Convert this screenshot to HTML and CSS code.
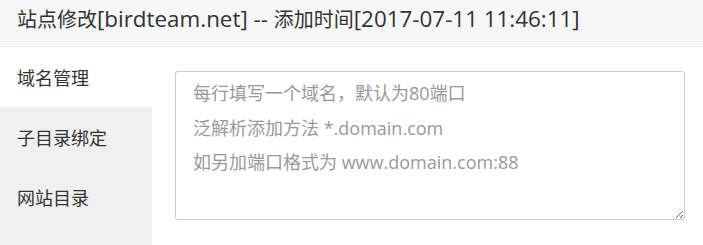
FILE: index.html
```html
<!DOCTYPE html>
<html lang="zh-CN">
<head>
<meta charset="utf-8">
<title>站点修改</title>
<link rel="stylesheet" href="styles.css">
</head>
<body>
<div class="layer">
  <div class="layer-title">站点修改<span class="lat">[birdteam.net] -- </span>添加时间<span class="lat">[2017-07-11 11:46:11]</span></div>
  <div class="layer-body">
    <ul class="tabs">
      <li class="tab active">域名管理</li>
      <li class="tab">子目录绑定</li>
      <li class="tab">网站目录</li>
    </ul>
    <div class="panel">
      <textarea class="domains" placeholder="每行填写一个域名，默认为80端口&#10;泛解析添加方法 *.domain.com&#10;如另加端口格式为 www.domain.com:88"></textarea>
    </div>
  </div>
</div>
</body>
</html>
```
FILE: styles.css
```css
html, body {
  margin: 0;
  padding: 0;
  background: #fff;
}
body {
  font-family: "Open Sans", "Noto Sans CJK SC", sans-serif;
  color: #333;
  width: 703px;
  height: 245px;
  overflow: hidden;
}
.layer-title {
  height: 47px;
  box-sizing: border-box;
  padding: 0 17px;
  line-height: 38px;
  font-size: 20px;
  background: #f7f7f7;
  border-bottom: 1px solid #eaeaea;
  white-space: nowrap;
}
.lat {
  font-size: 22.4px;
}
.layer-body {
  display: flex;
  height: 198px;
}
.tabs {
  list-style: none;
  margin: 0;
  padding: 0;
  width: 152px;
  background: #f0f0f0;
  flex: none;
}
.tab {
  height: 60px;
  box-sizing: border-box;
  padding: 2px 0 0 17px;
  line-height: 58px;
  font-size: 18px;
  color: #333;
}
.tab.active {
  background: #fff;
}
.panel {
  padding: 24px 0 0 23px;
}
.domains {
  display: block;
  width: 510px;
  height: 149px;
  box-sizing: border-box;
  margin: 0;
  border: 1px solid #ccc;
  border-radius: 3px;
  padding: 4px 17px;
  font-family: "Open Sans", "Noto Sans CJK SC", sans-serif;
  font-size: 18px;
  line-height: 34.5px;
  color: #333;
  resize: vertical;
  outline: none;
}
.domains::placeholder {
  color: #999;
}
```
